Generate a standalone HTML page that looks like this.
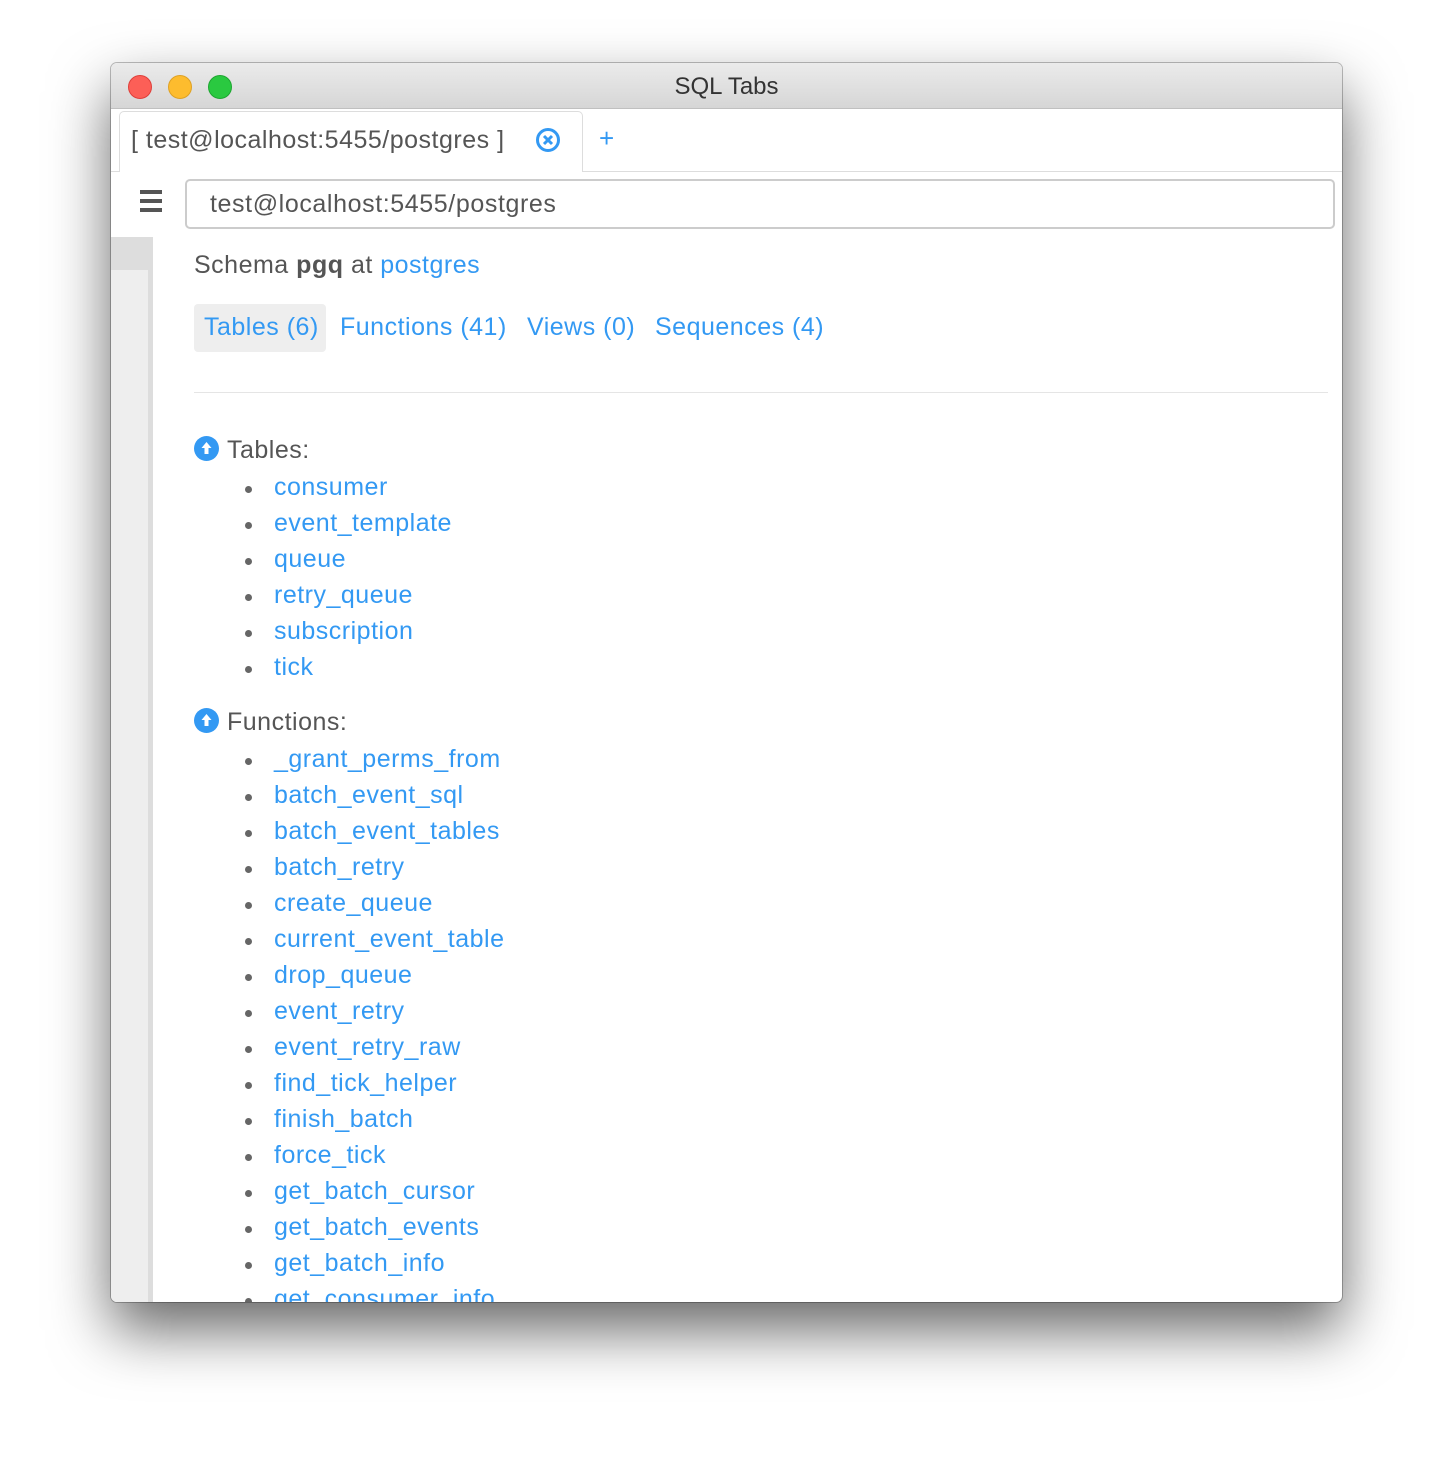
<!DOCTYPE html>
<html><head><style>
body{margin:0;width:1454px;height:1462px;background:#fff;position:relative;overflow:hidden;font-family:"Liberation Sans",Arial,sans-serif;}
.win{position:absolute;left:111px;top:63px;width:1231px;height:1239px;background:#fff;border-radius:6px;overflow:hidden;box-shadow:0 28px 60px rgba(0,0,0,.6),0 0 0 1px rgba(0,0,0,.25);}
.title{position:absolute;left:0;top:0;width:100%;height:45px;background:linear-gradient(#ebebeb,#d6d6d6);border-bottom:1px solid #c0c0c0;text-align:center;line-height:48px;font-size:24px;color:#333;}
.dot{position:absolute;top:12px;width:24px;height:24px;border-radius:50%;}
.tabbar{position:absolute;left:0;top:46px;width:100%;height:62px;border-bottom:1px solid #ddd;background:#fff;}
.tab{position:absolute;left:8px;top:2px;width:464px;height:61px;border:1px solid #ddd;border-bottom:none;border-radius:5px 5px 0 0;background:#fff;font-size:25px;letter-spacing:0.5px;color:#555;line-height:56px;padding-left:11px;box-sizing:border-box;}
.blue{color:#3399f3 !important;}
.side{position:absolute;left:0;top:174px;width:37px;height:1070px;background:#eeeeee;border-right:5px solid #dddddd;}
.sidetop{position:absolute;left:0;top:174px;width:37px;height:33px;background:#dddddd;}
.input{position:absolute;left:74px;top:116px;width:1150px;height:50px;border:2px solid #ccc;border-radius:5px;box-sizing:border-box;font-size:25px;letter-spacing:0.6px;color:#555;line-height:46px;padding-left:23px;}
.ham{position:absolute;left:29px;top:127px;width:22px;}
.ham div{height:4px;background:#555;margin-bottom:5px;}
.c{position:absolute;left:83px;font-size:25px;letter-spacing:0.5px;color:#555;white-space:nowrap;}
ul{margin:0;padding:0;list-style:none;}
li{position:absolute;left:163px;font-size:25px;letter-spacing:0.5px;color:#3399f3;white-space:nowrap;}
li:before{content:"";position:absolute;left:-29px;top:13px;width:7px;height:7px;border-radius:50%;background:#666;}
.ic{display:inline-block;width:25px;height:25px;border-radius:50%;background:#3399f3;vertical-align:-3px;margin-right:8px;position:relative;}
</style></head><body>
<div class="win">
 <div class="title">SQL Tabs
  <div class="dot" style="left:17px;background:#fc5f57;border:1px solid #de3f3a;box-sizing:border-box"></div>
  <div class="dot" style="left:57px;background:#fdbc2e;border:1px solid #dea124;box-sizing:border-box"></div>
  <div class="dot" style="left:97px;background:#2ac940;border:1px solid #1ea631;box-sizing:border-box"></div>
 </div>
 <div class="tabbar">
  <div class="tab">[ test@localhost:5455/postgres ]
   <svg style="position:absolute;left:415px;top:15px" width="26" height="26" viewBox="0 0 26 26"><circle cx="13" cy="13" r="10.5" fill="none" stroke="#3399f3" stroke-width="3"/><path d="M9 9L17 17M17 9L9 17" stroke="#3399f3" stroke-width="3"/></svg>
  </div>
  <div class="blue" style="position:absolute;left:488px;top:14px;font-size:26px">+</div>
 </div>
 <div class="ham"><div></div><div></div><div></div></div>
 <div class="input">test@localhost:5455/postgres</div>
 <div class="side"></div><div class="sidetop"></div>
 <div class="c" style="top:188px">Schema <b>pgq</b> at <span class="blue">postgres</span></div>
 <div style="position:absolute;left:83px;top:241px;width:132px;height:48px;background:#eee;border-radius:4px"></div>
 <div class="c blue" style="top:250px;left:93px">Tables (6)</div>
 <div class="c blue" style="top:250px;left:229px">Functions (41)</div>
 <div class="c blue" style="top:250px;left:416px">Views (0)</div>
 <div class="c blue" style="top:250px;left:544px">Sequences (4)</div>
 <div style="position:absolute;left:83px;top:329px;width:1134px;height:1px;background:#e5e5e5"></div>
 <div class="c" style="top:373px"><span class="ic"><svg width="25" height="25" viewBox="0 0 25 25" style="position:absolute;left:0;top:0"><path d="M12.5 6L7.5 12H10.5V18H14.5V12H17.5Z" fill="#fff"/></svg></span>Tables:</div>
 <ul>
  <li style="top:410px">consumer</li><li style="top:446px">event_template</li><li style="top:482px">queue</li><li style="top:518px">retry_queue</li><li style="top:554px">subscription</li><li style="top:590px">tick</li>
 </ul>
 <div class="c" style="top:645px"><span class="ic"><svg width="25" height="25" viewBox="0 0 25 25" style="position:absolute;left:0;top:0"><path d="M12.5 6L7.5 12H10.5V18H14.5V12H17.5Z" fill="#fff"/></svg></span>Functions:</div>
 <ul>
  <li style="top:682px">_grant_perms_from</li><li style="top:718px">batch_event_sql</li><li style="top:754px">batch_event_tables</li><li style="top:790px">batch_retry</li><li style="top:826px">create_queue</li><li style="top:862px">current_event_table</li><li style="top:898px">drop_queue</li><li style="top:934px">event_retry</li><li style="top:970px">event_retry_raw</li><li style="top:1006px">find_tick_helper</li><li style="top:1042px">finish_batch</li><li style="top:1078px">force_tick</li><li style="top:1114px">get_batch_cursor</li><li style="top:1150px">get_batch_events</li><li style="top:1186px">get_batch_info</li><li style="top:1222px">get_consumer_info</li>
 </ul>
</div>
</body></html>
